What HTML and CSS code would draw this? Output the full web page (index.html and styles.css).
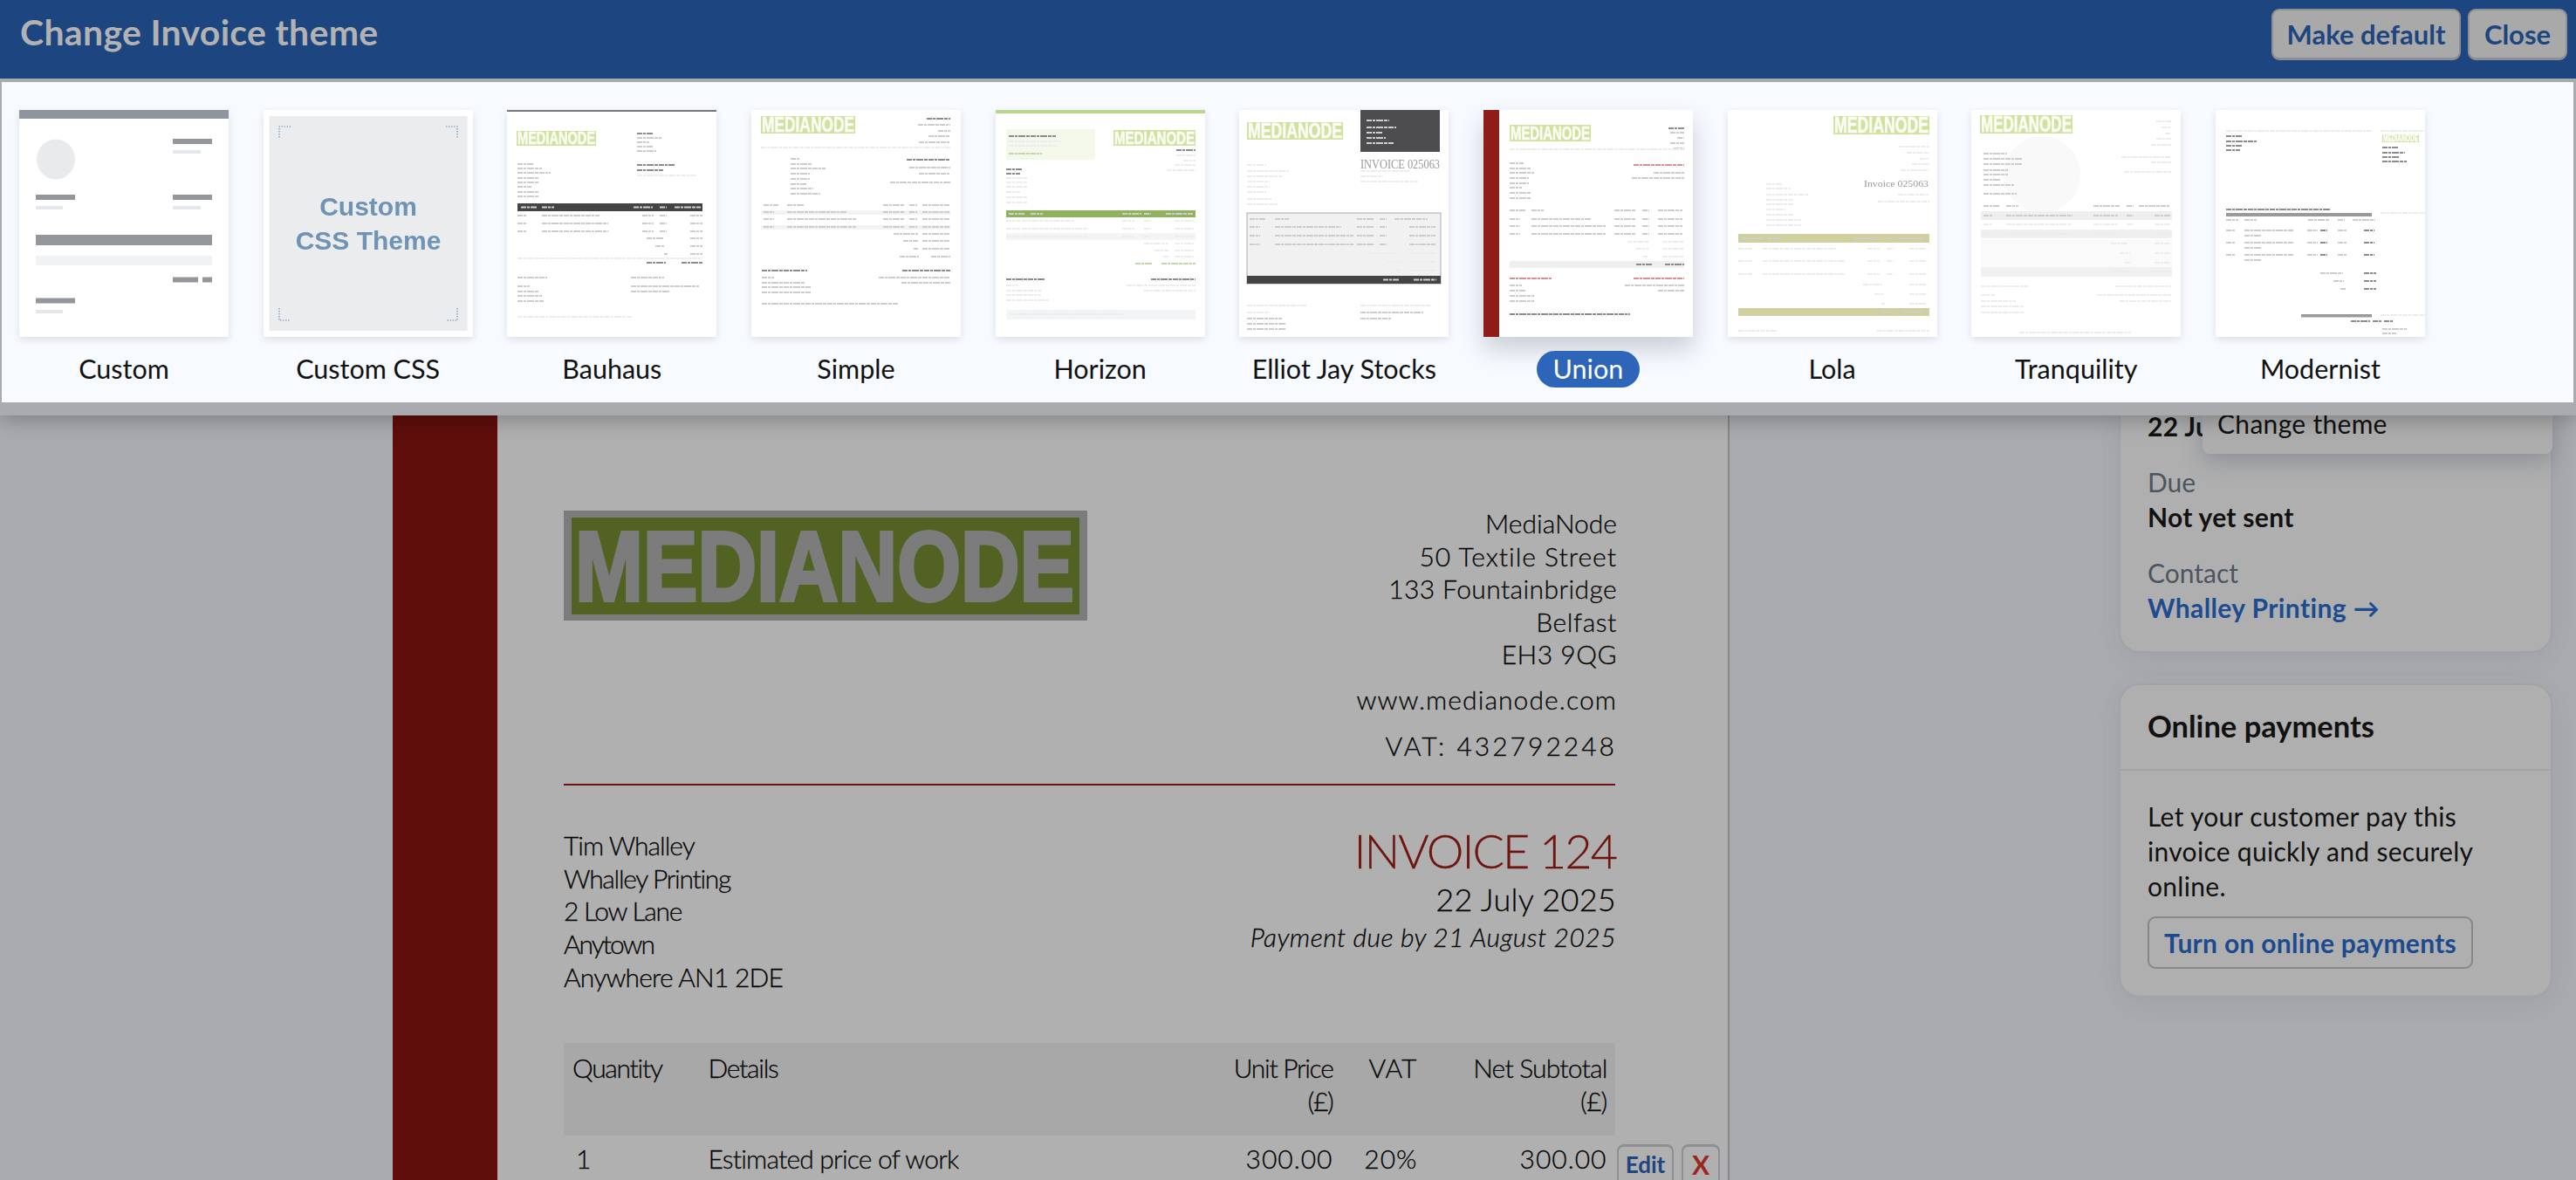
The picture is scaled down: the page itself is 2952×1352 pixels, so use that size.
FILE: index.html
```html
<!DOCTYPE html>
<html lang="en">
<head>
<meta charset="utf-8">
<title>Change Invoice theme</title>
<link rel="stylesheet" href="styles.css">
</head>
<body>
<div class="app">
  <header class="chrome">
    <div class="topbar">
      <h1 class="topbar-title">Change Invoice theme</h1>
      <div class="topbar-actions">
        <button class="top-btn top-btn-default">Make default</button>
        <button class="top-btn top-btn-close">Close</button>
      </div>
    </div>
    <div class="panel">
      <figure class="theme">
        <svg class="thumb" viewBox="0 0 240 260">
          <rect width="240" height="10" fill="#8f959d"/>
          <ellipse cx="42" cy="56.500" rx="22" ry="23" fill="#e8eaec"/>
          <path class="bar" d="M176 36h45M19 100h45M176 100h45M176 194.500h29M210 194.500h11M19 218.500h45"/>
          <rect class="soft" x="19" y="143" width="202" height="12" fill="#93969a"/>
          <rect class="soft" x="19" y="167" width="202" height="11" fill="#f1f2f4"/>
          <path class="sub" d="M176 48h32M19 112h31M176 112h32M19 231h31"/>
        </svg>
        <figcaption class="label">Custom</figcaption>
      </figure>
      <figure class="theme">
        <svg class="thumb" viewBox="0 0 240 260">
          <rect x="6.500" y="7" width="227" height="246" fill="#ebecee"/>
          <path class="dots" d="M31 19H18V32M209 19H222V32M18 227V241H31M222 227V241H209"/>
          <text class="css-text" x="120" y="121">Custom</text>
          <text class="css-text" x="120" y="160">CSS Theme</text>
        </svg>
        <figcaption class="label">Custom CSS</figcaption>
      </figure>
      <figure class="theme">
        <svg class="thumb" viewBox="0 0 240 260">
          <rect width="240" height="2" fill="#777"/>
          <rect class="lg" x="11" y="24" width="91" height="17"/><text class="lt" x="12" y="39" font-size="20" textLength="89" lengthAdjust="spacingAndGlyphs">MEDIANODE</text>
          <path class="d" d="M149 27h18M149 63h43M149 69h30"/>
          <path class="m" d="M149 32h28M149 37h14M149 42h18M149 47h22M12 62h18M12 67h28M12 72h38M12 78h24M12 83h24M12 88h16M12 94h24M12 99h24M12 121h10M40 121h66M155 121h13M175 121h8M210 121h14M12 130h10M40 130h76M155 130h13M175 130h8M210 130h14M12 139h10M40 139h76M155 139h13M175 139h8M210 139h14M160 147h20M210 147h14M170 156h10M210 156h14M180 165h4M210 165h14M12 192h34M142 192h38M12 202h14M12 208h24M12 213h28M12 219h30M142 202h78M142 208h44"/>
          <path class="f" d="M149 75h68M12 170h212M12 237h132"/>
          <rect class="soft" x="12" y="107" width="212" height="9" fill="#444"/>
          <path class="w" d="M16 111.500h18M40 111.500h14M145 111.500h22M175 111.500h8M192 111.500h30"/>
          <path class="d" d="M160 175h22M200 175h24"/>
        </svg>
        <figcaption class="label">Bauhaus</figcaption>
      </figure>
      <figure class="theme">
        <svg class="thumb" viewBox="0 0 240 260">
          <rect class="lg" x="11" y="7" width="108" height="20"/><text class="lt" x="12" y="25" font-size="24" textLength="106" lengthAdjust="spacingAndGlyphs">MEDIANODE</text>
          <rect class="soft" x="11" y="115" width="217" height="5" fill="#f2f2f3"/><rect class="soft" x="11" y="132" width="217" height="5" fill="#f2f2f3"/>
          <path class="d" d="M201 10h27M178 57h50M12 184h52M173 184h55"/>
          <path class="m" d="M191 17h37M214 24h14M203 30h25M192 37h36M45 56h10M45 62h24M45 67h40M45 73h22M45 79h22M45 85h18M45 90h26M45 96h34M181 66h47M192 73h36M159 83h69M14 109h17M41 109h19M151 109h25M181 109h9M196 109h32M14 117h12M41 117h68M151 117h25M181 117h9M196 117h32M14 125h12M41 125h79M151 125h25M181 125h9M196 125h32M14 134h12M41 134h79M151 134h25M181 134h9M196 134h32M163 142h28M196 142h32M174 150h17M196 150h32M186 159h5M196 159h32M170 168h22M206 168h22M12 192h14M12 198h50M12 203h56M12 209h56M146 192h82M172 198h56M12 222h156"/>
          <path class="f" d="M11 43h217"/>
        </svg>
        <figcaption class="label">Simple</figcaption>
      </figure>
      <figure class="theme">
        <svg class="thumb" viewBox="0 0 240 260">
          <rect width="240" height="4" fill="#b7d88a"/>
          <rect class="soft" x="12" y="22" width="102" height="35" fill="#f4f8ea"/>
          <rect class="lg" x="135" y="23" width="94" height="18"/><text class="lt" x="136" y="39" font-size="21" textLength="92" lengthAdjust="spacingAndGlyphs">MEDIANODE</text>
          <rect class="soft" x="12" y="115" width="217" height="8" fill="#8fb35a"/>
          <rect class="soft" x="12" y="141" width="217" height="8" fill="#f3f4f5"/>
          <rect class="soft" x="12" y="229" width="217" height="11" fill="#f3f4f5"/>
          <path class="d" d="M15 30h54M12 68h18M12 73h16M207 46h22M12 194h44M178 194h51"/>
          <path class="g" d="M15 50h38M160 176h20M190 176h39"/>
          <path class="f" d="M15 36h60M15 41h54M207 52h22M215 58h14M205 63h24M196 69h33M12 78h24M12 83h24M12 88h24M12 94h16M12 100h24M12 106h24M12 127h16M30 127h60M145 127h14M170 127h8M205 127h22M12 136h16M30 136h76M145 136h14M170 136h8M205 136h22M12 145h16M30 145h76M145 145h14M170 145h8M205 145h22M170 153h28M205 153h22M182 161h16M205 161h22M192 168h6M205 168h22M12 201h14M12 207h40M12 212h40M12 218h50M150 201h79M170 207h59M16 234h130"/>
          <path class="w" d="M15 119h18M40 119h14M145 119h22M170 119h8M195 119h32"/>
        </svg>
        <figcaption class="label">Horizon</figcaption>
      </figure>
      <figure class="theme">
        <svg class="thumb" viewBox="0 0 240 260">
          <rect class="lg" x="9" y="14" width="110" height="20"/><text class="lt" x="10" y="32" font-size="24" textLength="108" lengthAdjust="spacingAndGlyphs">MEDIANODE</text>
          <rect class="soft" x="139" y="0" width="91" height="48" fill="#4d4d4f"/>
          <path class="w" d="M146 12h26M146 20h34M146 26h18M146 32h22M146 38h32"/>
          <text class="serif" x="139" y="67" font-size="15" textLength="91" lengthAdjust="spacingAndGlyphs">INVOICE 025063</text>
          <path class="f" d="M139 70h56M139 76h26M139 82h66M9 63h22M9 70h48M9 76h40M9 82h26M9 88h26M9 94h22M9 102h28M9 108h36M9 224h68M139 224h80M9 232h26"/>
          <rect class="tbox" x="9" y="118" width="222" height="81"/>
          <rect class="soft" x="9" y="190" width="222" height="9" fill="#444"/>
          <path class="m" d="M12 125h18M41 125h16M135 125h20M161 125h8M178 125h38M12 134h12M41 134h76M135 134h20M161 134h8M195 134h30M12 144h12M41 144h90M135 144h20M161 144h8M195 144h30M12 154h12M41 154h90M135 154h20M161 154h8M195 154h30M9 239h40M9 245h44M9 251h44M139 232h72M139 239h36"/>
          <path class="f" d="M150 164h30M195 164h30M170 174h14M195 174h30M178 184h6M195 184h30"/>
          <path class="w" d="M165 194.500h18M200 194.500h26"/>
        </svg>
        <figcaption class="label">Elliot Jay Stocks</figcaption>
      </figure>
      <figure class="theme is-selected">
        <svg class="thumb" viewBox="0 0 240 260">
          <rect width="18" height="260" fill="#8e1c17"/>
          <rect class="lg" x="30" y="17" width="93" height="19"/><text class="lt" x="31" y="34" font-size="22" textLength="91" lengthAdjust="spacingAndGlyphs">MEDIANODE</text>
          <rect class="soft" x="30" y="173" width="200" height="8" fill="#efefef"/>
          <path class="d" d="M212 21h18M30 234h138M175 177h18M208 177h22"/>
          <path class="r" d="M172 63h58M30 193h48M172 193h58"/>
          <path class="m" d="M214 26h16M222 32h8M214 38h16M218 44h12M30 61h16M30 67h24M30 72h28M30 78h22M30 84h22M30 89h14M30 95h24M30 101h24M195 72h35M170 78h60M30 115h18M55 115h14M150 115h24M182 115h8M200 115h28M30 125h12M55 125h68M150 125h24M182 125h8M200 125h28M30 133h12M55 133h86M150 133h24M182 133h8M200 133h28M30 142h12M55 142h86M150 142h24M182 142h8M200 142h28M30 201h14M30 207h18M30 213h28M30 219h28M162 201h68M200 207h30"/>
          <path class="f" d="M30 45h200M165 151h24M205 151h24M175 159h14M205 159h24M182 168h6M205 168h24"/>
        </svg>
        <figcaption class="label">Union</figcaption>
      </figure>
      <figure class="theme">
        <svg class="thumb" viewBox="0 0 240 260">
          <rect class="lg" x="121" y="7" width="110" height="21"/><text class="lt" x="122" y="26" font-size="25" textLength="108" lengthAdjust="spacingAndGlyphs">MEDIANODE</text>
          <rect class="soft" x="12" y="142" width="219" height="10" fill="#cfcf9f"/>
          <rect class="soft" x="12" y="227" width="219" height="9" fill="#cfcf9f"/>
          <text class="serif" x="156" y="88" font-size="11" textLength="74" lengthAdjust="spacingAndGlyphs">Invoice 025063</text>
          <path class="f" d="M196 42h35M205 49h26M220 56h11M211 62h20M198 69h33M195 97h36M172 105h59M44 85h18M44 90h28M44 97h48M44 103h32M44 108h32M44 114h22M44 120h32M44 126h40M44 132h40M12 159h16M40 159h84M160 159h14M182 159h8M208 159h20M12 173h16M40 173h94M160 173h14M182 173h8M208 173h20M12 188h16M40 188h94M160 188h14M182 188h8M208 188h20M155 200h22M208 200h20M168 211h10M208 211h20M176 222h4M208 222h20M12 253h44M171 253h60"/>
          <path class="w" d="M16 147h24M45 147h14M145 147h26M182 147h8M195 147h30M176 231.500h12M200 231.500h24"/>
        </svg>
        <figcaption class="label">Lola</figcaption>
      </figure>
      <figure class="theme">
        <svg class="thumb" viewBox="0 0 240 260">
          <circle cx="81" cy="74" r="44" fill="#f9f9fa"/>
          <rect class="lg" x="10" y="6" width="106" height="21"/><text class="lt" x="11" y="25" font-size="25" textLength="104" lengthAdjust="spacingAndGlyphs">MEDIANODE</text>
          <rect class="soft" x="11" y="116" width="219" height="10" fill="#efeff0"/>
          <rect class="soft" x="11" y="137" width="219" height="10" fill="#efeff0"/>
          <rect class="soft" x="11" y="148" width="219" height="32" fill="#fafafa"/>
          <rect class="soft" x="11" y="180" width="219" height="11" fill="#f0f0f1"/>
          <path class="m" d="M14 110h18M40 110h14M140 110h30M178 110h8M192 110h36M14 50h27M14 56h44M14 62h44M14 69h28M14 74h28M14 80h20M14 86h36M14 96h38M14 121h10M40 121h76M140 121h28M178 121h8M210 121h18"/>
          <path class="f" d="M212 13h17M218 20h11M222 27h7M212 33h17M206 40h23M172 54h57M206 60h23M175 71h54M14 131h10M40 131h76M140 131h28M178 131h8M210 131h18M14 142h10M40 142h76M140 142h28M178 142h8M210 142h18M160 153h20M210 153h18M170 164h12M210 164h18M176 175h6M210 175h18M162 185h22M205 185h24M11 202h54M165 202h64M11 212h16M11 219h40M11 225h50M11 232h50M144 212h85M170 219h59M55 255h128"/>
        </svg>
        <figcaption class="label">Tranquility</figcaption>
      </figure>
      <figure class="theme">
        <svg class="thumb" viewBox="0 0 240 260">
          <path class="f" d="M12 24h167M189 24h51M189 118h51M189 235h51"/>
          <rect class="lg" x="191" y="28" width="42" height="9"/><text class="lt" x="192" y="36" font-size="10" textLength="40" lengthAdjust="spacingAndGlyphs">MEDIANODE</text>
          <path class="d" d="M12 30h18M12 36h36M12 41h18M12 46h16M191 43h18M12 114h120M191 49h26M191 54h20M191 59h28M120 138h8M170 138h12M120 152h8M170 152h12M120 166h8M170 166h12M170 187h14M170 196h14M170 205h14M155 242h22M180 242h10M193 242h10"/>
          <path class="m" d="M12 126h14M33 126h14M106 126h24M140 126h8M157 126h26M12 138h10M33 138h56M105 138h12M140 138h10M33 144h20M12 152h10M33 152h56M105 152h12M140 152h10M33 158h20M12 166h10M33 166h56M105 166h12M140 166h10M33 172h20M120 187h26M135 196h12M143 205h6M191 251h28M191 256h16"/>
          <rect class="soft" x="12" y="118" width="167" height="4" fill="#999"/>
          <rect class="soft" x="98" y="234" width="81" height="3.500" fill="#999"/>
        </svg>
        <figcaption class="label">Modernist</figcaption>
      </figure>
    </div>
  </header>

  <main class="workspace">
    <article class="paper">
      <div class="paper-bar"></div>
      <div class="sheet">
        <div class="sheet-head">
          <svg class="logo" viewBox="0 0 600 126">
            <rect width="600" height="126" fill="#7c7c7c"/>
            <rect x="9" y="8" width="582" height="111" fill="#526223"/>
            <text class="logo-text" x="13" y="103" textLength="572" lengthAdjust="spacingAndGlyphs">MEDIANODE</text>
          </svg>
          <address class="from">
            <span class="ln">MediaNode</span>
            <span class="ln ls-p10">50 Textile Street</span>
            <span class="ln ls-p04">133 Fountainbridge</span>
            <span class="ln ls-p06">Belfast</span>
            <span class="ln ls-p05">EH3 9QG</span>
            <span class="ln from-web ls-p11">www.medianode.com</span>
            <span class="ln from-vat ls-p30">VAT: 432792248</span>
          </address>
        </div>
        <hr class="rule">
        <div class="sheet-meta">
          <address class="to">
            <span class="ln ls-m10">Tim Whalley</span>
            <span class="ln ls-m13">Whalley Printing</span>
            <span class="ln ls-m13">2 Low Lane</span>
            <span class="ln ls-m20">Anytown</span>
            <span class="ln ls-m08">Anywhere AN1 2DE</span>
          </address>
          <div class="meta">
            <h2 class="inv-title">INVOICE 124</h2>
            <p class="inv-date">22 July 2025</p>
            <p class="inv-due">Payment due by 21 August 2025</p>
          </div>
        </div>
        <div class="lines">
          <div class="line line-head">
            <span class="ls-m13">Quantity</span><span class="ls-m13">Details</span><span class="num ls-m13">Unit Price<br>(£)</span><span class="num ls-p10">VAT</span><span class="num ls-m08">Net Subtotal<br>(£)</span>
          </div>
          <div class="line line-item">
            <span class="qty">1</span><span class="ls-m08">Estimated price of work</span><span class="num ls-p10">300.00</span><span class="num ls-p10">20%</span><span class="num ls-p10">300.00</span>
            <div class="line-actions">
              <button class="mini-btn">Edit</button>
              <button class="mini-btn mini-del">X</button>
            </div>
          </div>
        </div>
      </div>
    </article>
    <aside class="side">
      <section class="card card-info">
        <div class="info-value info-first">22 July 2025</div>
        <div class="info-label">Due</div>
        <div class="info-value">Not yet sent</div>
        <div class="info-label">Contact</div>
        <a class="info-link">Whalley Printing →</a>
        <div class="menu"><span class="menu-item">Change theme</span></div>
      </section>
      <section class="card card-pay">
        <h3 class="card-title">Online payments</h3>
        <div class="card-body">
          <p class="card-copy">Let your customer pay this invoice quickly and securely online.</p>
          <button class="outline-btn">Turn on online payments</button>
        </div>
      </section>
    </aside>
  </main>
</div>
</body>
</html>
```

FILE: styles.css
```css
* { box-sizing: border-box; }
html, body { margin: 0; height: 100%; }
body { background: #a9abaf; font-family: "Lato", "Liberation Sans", sans-serif; color: #111; overflow: hidden; }
p, h1, h2, h3, figure { margin: 0; }
address { font-style: normal; }
button { font: inherit; cursor: pointer; }

.app { height: 1352px; display: flex; flex-direction: column; overflow: hidden; }
.chrome { position: relative; z-index: 3; background: #a9abaf; box-shadow: 0 4px 24px rgba(0,0,0,.28); padding-bottom: 15px; flex: none; }

.topbar { height: 90px; background: #1d4580; display: flex; justify-content: space-between; padding: 10px 10px 0 23px; }
.topbar-title { font-size: 41px; line-height: 54px; font-weight: 700; color: #b2b2b2; letter-spacing: .3px; }
.topbar-actions { display: flex; gap: 8px; height: 59px; }
.top-btn { background: #a9a9a9; border: 2px solid #8d8f93; border-bottom-width: 3px; border-radius: 9px; padding: 0; color: #1d4580; font-size: 31px; font-weight: 700; }
.top-btn-default { width: 217px; }
.top-btn-close { width: 114px; }

.panel { margin: 4px 3px 0 2px; height: 367px; background: #f7faff; display: flex; gap: 39.670px; padding: 32px 0 0 20px; }
.theme { width: 240px; flex: none; text-align: center; }
.thumb { display: block; width: 240px; height: 260px; background: #fff; box-shadow: 0 3px 8px rgba(40,50,70,.13); }
.is-selected .thumb { box-shadow: 0 14px 26px rgba(40,50,70,.22); }
.label { display: inline-block; margin-top: 16px; height: 42px; line-height: 40px; border-radius: 21px; font-size: 30.500px; color: #111; white-space: nowrap; }
.is-selected .label { background: #2d66b8; color: #fff; padding: 0 19px; }

.thumb path { fill: none; stroke-width: 1.800; stroke-dasharray: 6 1 3 1 8 1 4 1; filter: blur(.6px); }
.soft { filter: blur(.4px); }
.thumb .bar { stroke: #93969a; stroke-width: 6; stroke-dasharray: none; }
.thumb .sub { stroke: #e6e7ea; stroke-width: 4; stroke-dasharray: none; }
.d { stroke: #8a8b8e; }
.m { stroke: #cbccce; }
.f { stroke: #ebecee; }
.w { stroke: #cfcfcf; }
.g { stroke: #bfd8a5; }
.r { stroke: #d5908f; }
.thumb .dots { stroke: #6f93b5; stroke-dasharray: 1.500 1.500; stroke-width: 1.200; filter: none; }
.lg { fill: #cfe29f; filter: blur(.4px); }
.lt { fill: #fbfdf6; stroke: #fbfdf6; stroke-width: .5; font-family: "Liberation Sans", sans-serif; font-weight: 700; filter: blur(.35px); }
.serif { fill: #999; font-family: "Liberation Serif", serif; filter: blur(.3px); }
.tbox { fill: #f1f1f2; stroke: #aaa; stroke-width: 1; }
.css-text { fill: #6f93b5; font: 700 30px "Liberation Sans", sans-serif; text-anchor: middle; filter: blur(.4px); }

.workspace { flex: 1; display: flex; min-height: 0; overflow: hidden; padding-left: 450px; }
.paper { width: 1532px; flex: none; display: flex; background: #b0b0b0; border-right: 2px solid #85878b; font-weight: 300; font-size: 30px; line-height: 37.600px; color: #000; -webkit-text-stroke: .3px #111; }
.paper-bar { width: 120px; background: #5f0e0b; flex: none; }
.sheet { width: 1205px; margin-left: 76px; padding-top: 105px; flex: none; }
.sheet-head { display: flex; justify-content: space-between; align-items: flex-start; }
.logo { width: 600px; height: 126px; margin-top: 4px; display: block; -webkit-text-stroke: 0; }
.logo-text { font: 700 114px "Liberation Sans", sans-serif; fill: #7c7c7c; stroke: #7c7c7c; stroke-width: 4; }
.ln { display: block; }
.from { text-align: right; margin-right: -2px; }
.from-web { margin-top: 14px; }
.from-vat { margin-top: 15px; }
.ls-p04 { letter-spacing: .4px; }
.ls-p05 { letter-spacing: .5px; }
.ls-p06 { letter-spacing: .6px; }
.ls-p10 { letter-spacing: 1px; }
.ls-p11 { letter-spacing: 1.100px; }
.ls-p30 { letter-spacing: 3px; }
.ls-m08 { letter-spacing: -.8px; }
.ls-m10 { letter-spacing: -1px; }
.ls-m13 { letter-spacing: -1.300px; }
.ls-m20 { letter-spacing: -2px; }
.rule { height: 2px; border: 0; background: #6e140e; margin: 25px 0 0; }
.sheet-meta { display: flex; justify-content: space-between; align-items: flex-start; margin-top: 45px; }
.to { padding-top: 5px; }
.meta { text-align: right; margin-right: -1px; }
.inv-title { font-weight: 300; font-size: 54px; line-height: 60px; color: #6e140e; letter-spacing: -2px; -webkit-text-stroke: .3px #6e140e; }
.inv-date { font-size: 36px; line-height: 44px; margin-top: 3px; letter-spacing: .3px; }
.inv-due { font-style: italic; line-height: 40px; margin-top: 1px; letter-spacing: .45px; }

.lines { margin-top: 57px; }
.line { display: grid; grid-template-columns: 155.500px 1fr 120px 97px 217px; padding: 0 9.500px 0 10px; position: relative; }
.line-head { background: #a8a8a8; height: 106px; padding-top: 10px; }
.line-item { padding-top: 8px; }
.num { text-align: right; }
.qty { padding-left: 4px; }
.line-actions { position: absolute; left: 100%; top: 10px; margin-left: 2px; display: flex; gap: 9px; -webkit-text-stroke: 0; }
.mini-btn { height: 60px; width: 65px; padding: 0; border: 2px solid #8d8f93; border-top-width: 3px; border-radius: 8px; background: transparent; color: #1d4580; font: 700 26px/40px "Lato", sans-serif; display: flex; justify-content: center; align-items: flex-start; }
.mini-del { width: 44px; color: #9c2522; font-size: 30px; }

.side { width: 497px; margin-left: 446px; flex: none; -webkit-text-stroke: 0; }
.card { background: #afafaf; border: 2px solid #a1a3a7; border-radius: 24px; box-shadow: 0 6px 30px rgba(60,70,90,.09); }
.card-info { display: flow-root; position: relative; height: 272px; border-top: 0; border-radius: 0 0 24px 24px; padding: 0 31px; font-size: 30px; line-height: 40px; }
.info-first { margin-top: -8px; }
.info-label { margin-top: 24px; color: #4d5560; }
.info-value { font-weight: 700; color: #111; letter-spacing: .3px; }
.info-link { font-weight: 700; color: #1c4c8f; display: block; letter-spacing: .4px; }
.menu { position: absolute; left: 94px; top: 0; width: 401px; height: 44px; background: #adadad; border-radius: 0 0 8px 8px; box-shadow: 0 8px 26px rgba(60,70,90,.3); padding-left: 17px; overflow: hidden; }
.menu-item { display: block; margin-top: -11px; color: #111; letter-spacing: .3px; }
.card-pay { margin-top: 35px; height: 360px; }
.card-title { font-size: 34.500px; line-height: 94px; height: 98px; padding-left: 31px; border-bottom: 2px solid #a1a3a7; font-weight: 700; color: #111; }
.card-body { padding: 32px 31px 0; font-size: 30px; line-height: 40px; letter-spacing: .3px; }
.outline-btn { display: block; width: 373px; height: 60px; margin-top: 15px; padding: 0; white-space: nowrap; background: transparent; border: 2px solid #85878b; border-radius: 9px; color: #1c4a8e; font-size: 30px; font-weight: 700; letter-spacing: .3px; }
```
